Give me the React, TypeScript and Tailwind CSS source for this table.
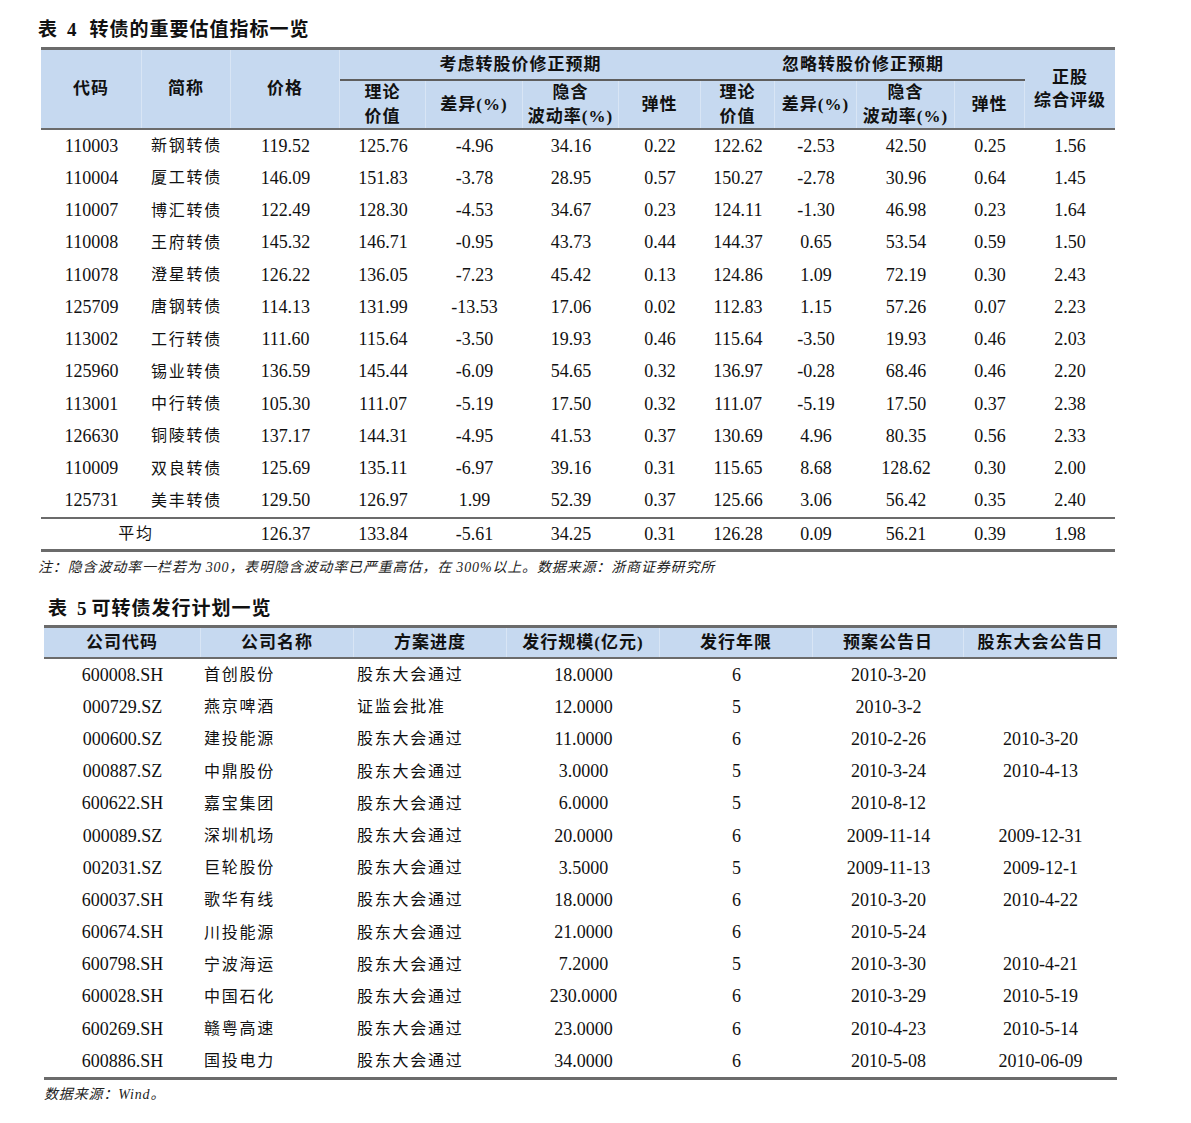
import React from "react";

const T4 =
  "grid grid-cols-[101px_89px_109px_86px_97px_96px_82px_74px_82px_98px_70px_90px]";
const T5 = "grid grid-cols-[157px_153px_153px_153px_153px_151px_153px]";

const t4Rows: string[][] = [
  ["110003", "新钢转债", "119.52", "125.76", "-4.96", "34.16", "0.22", "122.62", "-2.53", "42.50", "0.25", "1.56"],
  ["110004", "厦工转债", "146.09", "151.83", "-3.78", "28.95", "0.57", "150.27", "-2.78", "30.96", "0.64", "1.45"],
  ["110007", "博汇转债", "122.49", "128.30", "-4.53", "34.67", "0.23", "124.11", "-1.30", "46.98", "0.23", "1.64"],
  ["110008", "王府转债", "145.32", "146.71", "-0.95", "43.73", "0.44", "144.37", "0.65", "53.54", "0.59", "1.50"],
  ["110078", "澄星转债", "126.22", "136.05", "-7.23", "45.42", "0.13", "124.86", "1.09", "72.19", "0.30", "2.43"],
  ["125709", "唐钢转债", "114.13", "131.99", "-13.53", "17.06", "0.02", "112.83", "1.15", "57.26", "0.07", "2.23"],
  ["113002", "工行转债", "111.60", "115.64", "-3.50", "19.93", "0.46", "115.64", "-3.50", "19.93", "0.46", "2.03"],
  ["125960", "锡业转债", "136.59", "145.44", "-6.09", "54.65", "0.32", "136.97", "-0.28", "68.46", "0.46", "2.20"],
  ["113001", "中行转债", "105.30", "111.07", "-5.19", "17.50", "0.32", "111.07", "-5.19", "17.50", "0.37", "2.38"],
  ["126630", "铜陵转债", "137.17", "144.31", "-4.95", "41.53", "0.37", "130.69", "4.96", "80.35", "0.56", "2.33"],
  ["110009", "双良转债", "125.69", "135.11", "-6.97", "39.16", "0.31", "115.65", "8.68", "128.62", "0.30", "2.00"],
  ["125731", "美丰转债", "129.50", "126.97", "1.99", "52.39", "0.37", "125.66", "3.06", "56.42", "0.35", "2.40"],
];

const t4Avg = ["126.37", "133.84", "-5.61", "34.25", "0.31", "126.28", "0.09", "56.21", "0.39", "1.98"];

const t5Rows: string[][] = [
  ["600008.SH", "首创股份", "股东大会通过", "18.0000", "6", "2010-3-20", ""],
  ["000729.SZ", "燕京啤酒", "证监会批准", "12.0000", "5", "2010-3-2", ""],
  ["000600.SZ", "建投能源", "股东大会通过", "11.0000", "6", "2010-2-26", "2010-3-20"],
  ["000887.SZ", "中鼎股份", "股东大会通过", "3.0000", "5", "2010-3-24", "2010-4-13"],
  ["600622.SH", "嘉宝集团", "股东大会通过", "6.0000", "5", "2010-8-12", ""],
  ["000089.SZ", "深圳机场", "股东大会通过", "20.0000", "6", "2009-11-14", "2009-12-31"],
  ["002031.SZ", "巨轮股份", "股东大会通过", "3.5000", "5", "2009-11-13", "2009-12-1"],
  ["600037.SH", "歌华有线", "股东大会通过", "18.0000", "6", "2010-3-20", "2010-4-22"],
  ["600674.SH", "川投能源", "股东大会通过", "21.0000", "6", "2010-5-24", ""],
  ["600798.SH", "宁波海运", "股东大会通过", "7.2000", "5", "2010-3-30", "2010-4-21"],
  ["600028.SH", "中国石化", "股东大会通过", "230.0000", "6", "2010-3-29", "2010-5-19"],
  ["600269.SH", "赣粤高速", "股东大会通过", "23.0000", "6", "2010-4-23", "2010-5-14"],
  ["600886.SH", "国投电力", "股东大会通过", "34.0000", "6", "2010-5-08", "2010-06-09"],
];

const isCJK = (s: string) => /[\u4e00-\u9fff]/.test(s);

function Cell({ v, left }: { v: string; left?: boolean }) {
  const cls = isCJK(v)
    ? "text-[16px] tracking-[1.75px]"
    : "text-[18px]";
  return (
    <div
      className={`flex h-full items-center ${left ? "justify-start pl-[3px]" : "justify-center"} ${cls} whitespace-nowrap`}
    >
      {v}
    </div>
  );
}

const H = "flex items-center justify-center font-bold text-[17px] tracking-[1px] whitespace-nowrap";
const HL = "border-r border-[#d8e5f5]";

export default function App() {
  return (
    <div className="w-[1191px] min-h-[1123px] bg-white pt-[18px] text-[#111] font-['Liberation_Serif','Noto_Sans_CJK_SC',serif]">
      {/* Title 4 */}
      <div className="ml-[38px] h-[24px] leading-[24px] text-[19px] font-bold tracking-[1px] flex items-center whitespace-nowrap">
        <span>表</span>
        <span className="ml-[9px] mr-[12px]">4</span>
        <span>转债的重要估值指标一览</span>
      </div>

      {/* Table 4 */}
      <div className="mt-[5px] ml-[41px] w-[1074px]">
        <div className={`${T4} grid-rows-[31px_24px_23px] bg-[#c6d9f0] border-t-[3px] border-b-2 border-[#6b6b6b]`}>
          <div className={`${H} ${HL} col-start-1 row-start-1 row-span-3`}>代码</div>
          <div className={`${H} ${HL} col-start-2 row-start-1 row-span-3`}>简称</div>
          <div className={`${H} ${HL} col-start-3 row-start-1 row-span-3`}>价格</div>
          <div className={`${H} col-start-4 col-span-4 row-start-1 border-b-2 border-[#5e5e5e]`}>考虑转股价修正预期</div>
          <div className={`${H} col-start-8 col-span-4 row-start-1 border-b-2 border-[#5e5e5e]`}>忽略转股价修正预期</div>
          <div className={`${H} col-start-12 row-start-1 row-span-3 flex-col leading-[23px]`}>
            <span>正股</span>
            <span>综合评级</span>
          </div>

          <div className={`${H} ${HL} col-start-4 row-start-2`}>理论</div>
          <div className={`${H} ${HL} col-start-4 row-start-3`}>价值</div>
          <div className={`${H} ${HL} col-start-5 row-start-2 row-span-2`}>差异(%)</div>
          <div className={`${H} ${HL} col-start-6 row-start-2`}>隐含</div>
          <div className={`${H} ${HL} col-start-6 row-start-3`}>波动率(%)</div>
          <div className={`${H} ${HL} col-start-7 row-start-2 row-span-2`}>弹性</div>

          <div className={`${H} ${HL} col-start-8 row-start-2`}>理论</div>
          <div className={`${H} ${HL} col-start-8 row-start-3`}>价值</div>
          <div className={`${H} ${HL} col-start-9 row-start-2 row-span-2`}>差异(%)</div>
          <div className={`${H} ${HL} col-start-10 row-start-2`}>隐含</div>
          <div className={`${H} ${HL} col-start-10 row-start-3`}>波动率(%)</div>
          <div className={`${H} ${HL} col-start-11 row-start-2 row-span-2`}>弹性</div>
        </div>

        {t4Rows.map((r, i) => (
          <div key={i} className={`${T4} h-[32.25px]`}>
            {r.map((v, j) => (
              <Cell key={j} v={v} />
            ))}
          </div>
        ))}

        <div className={`${T4} h-[35px] border-t-2 border-b-[3px] border-[#6b6b6b]`}>
          <div className="col-span-2 flex items-center justify-center text-[16px] tracking-[1.75px]">平均</div>
          {t4Avg.map((v, j) => (
            <Cell key={j} v={v} />
          ))}
        </div>
      </div>

      {/* Note 4 */}
      <div className="mt-[6px] ml-[38px] h-[20px] leading-[20px] italic text-[14px] tracking-[0.85px] text-[#222] whitespace-nowrap">
        注：隐含波动率一栏若为 300，表明隐含波动率已严重高估，在 300%以上。数据来源：浙商证券研究所
      </div>

      {/* Title 5 */}
      <div className="mt-[19px] ml-[48px] h-[24px] leading-[24px] text-[19px] font-bold tracking-[1px] flex items-center whitespace-nowrap">
        <span>表</span>
        <span className="ml-[9px] mr-[4px]">5</span>
        <span>可转债发行计划一览</span>
      </div>

      {/* Table 5 */}
      <div className="mt-[4px] ml-[44px] w-[1073px] border-b-[3px] border-[#6b6b6b]">
        <div className={`${T5} h-[34px] bg-[#c6d9f0] border-t-[3px] border-b-2 border-[#6b6b6b]`}>
          <div className={`${H} ${HL}`}>公司代码</div>
          <div className={`${H} ${HL}`}>公司名称</div>
          <div className={`${H} ${HL}`}>方案进度</div>
          <div className={`${H} ${HL}`}>发行规模(亿元)</div>
          <div className={`${H} ${HL}`}>发行年限</div>
          <div className={`${H} ${HL}`}>预案公告日</div>
          <div className={H}>股东大会公告日</div>
        </div>
        {t5Rows.map((r, i) => (
          <div key={i} className={`${T5} h-[32.2px]`}>
            {r.map((v, j) => (
              <Cell key={j} v={v} left={j === 1 || j === 2} />
            ))}
          </div>
        ))}
      </div>

      {/* Note 5 */}
      <div className="mt-[5px] ml-[44px] h-[20px] leading-[20px] italic text-[14px] tracking-[0.85px] text-[#222] whitespace-nowrap">
        数据来源：Wind。
      </div>
    </div>
  );
}
